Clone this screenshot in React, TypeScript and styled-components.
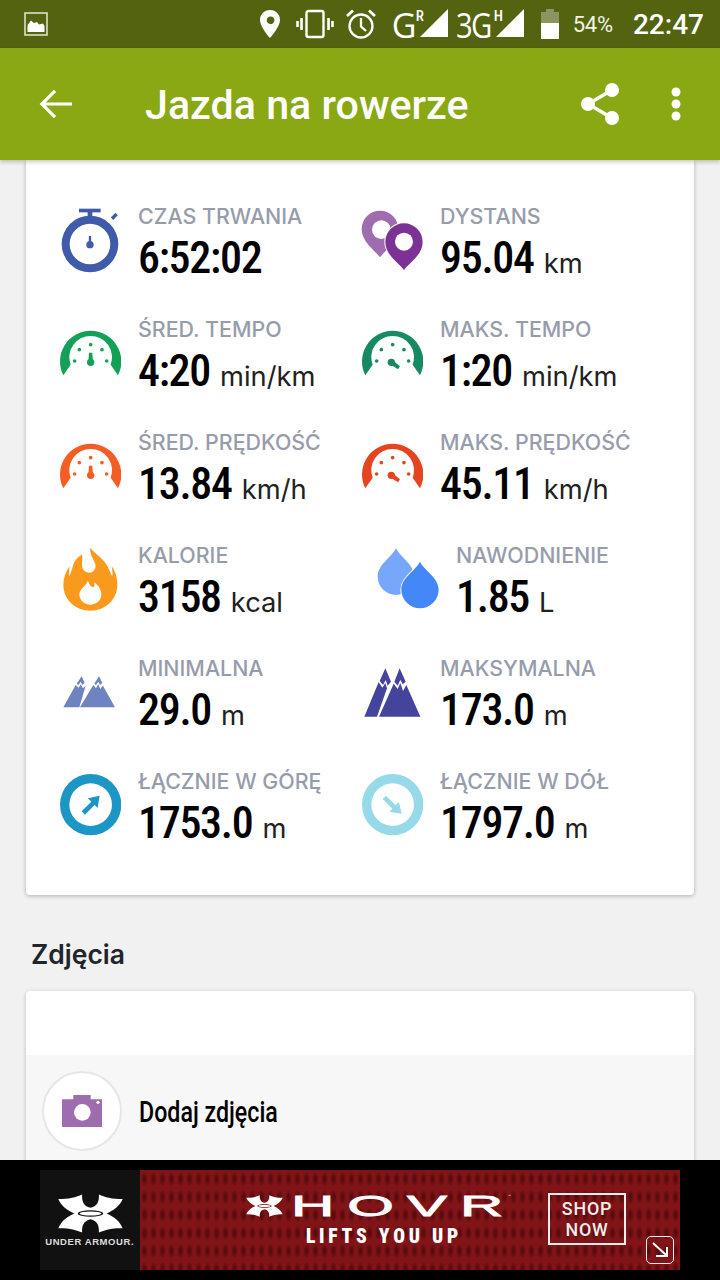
import React from "react";
import styled, { createGlobalStyle } from "styled-components";

const Global = createGlobalStyle`
  html, body { margin: 0; padding: 0; background: #f1f1f1; }
  #root { width: 720px; height: 1280px; overflow: hidden; }
  * { box-sizing: border-box; }
`;

const Screen = styled.div`
  width: 720px;
  height: 1280px;
  display: flex;
  flex-direction: column;
  background: #f1f1f1;
  font-family: Roboto, "Liberation Sans", sans-serif;
  overflow: hidden;
`;

const StatusBar = styled.div`
  height: 48px;
  flex: none;
  background: #53630f;
  color: #fff;
  display: flex;
  align-items: center;
  padding: 0 16px 0 24px;
`;

const StatusRight = styled.div`
  margin-left: auto;
  display: flex;
  align-items: center;
`;

const NetLabel = styled.span<{ $sx: number }>`
  font-family: "Open Sans", Roboto, sans-serif;
  font-size: 34px;
  line-height: 36px;
  letter-spacing: -2px;
  display: inline-block;
  transform: scaleX(${p => p.$sx});
  transform-origin: left center;
  margin-top: 2px;
`;

const Net = styled.div<{ $w: number; $ml: number }>`
  position: relative;
  display: flex;
  height: 48px;
  align-items: center;
  width: ${p => p.$w}px;
  margin-left: ${p => p.$ml}px;
`;

const NetSup = styled.span<{ $x: number }>`
  position: absolute;
  left: ${p => p.$x}px;
  top: 9px;
  font-family: Roboto, sans-serif;
  font-size: 15px;
  font-weight: 500;
  line-height: 14px;
  font-stretch: 80%;
`;

const NetTriangle = styled.svg`
  position: absolute;
  right: 0;
  top: 9px;
`;

const Percent = styled.span`
  font-size: 22px;
  color: #f1f3e5;
  margin-left: 14px;
  letter-spacing: -0.2px;
`;

const Clock = styled.span`
  font-size: 28px;
  font-weight: 500;
  margin-left: 20px;
`;

const AppBar = styled.header`
  height: 112px;
  flex: none;
  background: #89a813;
  color: #fff;
  display: flex;
  align-items: center;
  padding: 0 39px 0 39px;
  position: relative;
  z-index: 2;
  box-shadow: 0 2px 4px rgba(0, 0, 0, 0.22);
`;

const Title = styled.h1`
  margin: 2px 0 0 72px;
  font-size: 41.2px;
  font-weight: 500;
  font-family: Roboto, sans-serif;
  white-space: nowrap;
`;

const BarActions = styled.div`
  margin-left: auto;
  display: flex;
  align-items: center;
  gap: 52px;
`;

const Content = styled.main`
  flex: 1;
  min-height: 0;
  padding: 0 26px;
  overflow: hidden;
`;

const StatsCard = styled.section`
  background: #fff;
  height: 735px;
  border-radius: 0 0 4px 4px;
  box-shadow: 0 1px 4px rgba(0, 0, 0, 0.28);
  display: grid;
  grid-template-columns: 302px 302px;
  grid-auto-rows: 113px;
  padding: 43px 0 0 34px;
`;

const Stat = styled.div`
  display: flex;
  align-items: flex-start;
`;

const IconSlot = styled.div<{ $w: number }>`
  width: ${p => p.$w}px;
  flex: none;
  height: 74px;
  display: flex;
  align-items: center;
`;

const IconShift = styled.div<{ $ml: number }>`
  margin-left: ${p => p.$ml}px;
  display: flex;
`;

const StatText = styled.div`
  display: flex;
  flex-direction: column;
`;

const Label = styled.div`
  font-family: Inter, Roboto, sans-serif;
  font-size: 21.4px;
  font-weight: 500;
  line-height: 26px;
  color: #979cab;
  white-space: nowrap;
`;

const ValueRow = styled.div`
  display: flex;
  align-items: baseline;
  margin-top: 5px;
  white-space: nowrap;
`;

const Value = styled.span`
  font-family: Roboto, sans-serif;
  font-size: 44px;
  line-height: 48px;
  font-weight: 500;
  color: #000;
  font-stretch: 78%;
  letter-spacing: -1.3px;
`;

const Unit = styled.span`
  font-family: Inter, Roboto, sans-serif;
  font-size: 27.3px;
  color: #212121;
  margin-left: 10px;
`;

const SectionTitle = styled.h2`
  margin: 41px 0 0 5px;
  height: 36px;
  font-family: Inter, Roboto, sans-serif;
  font-size: 26.5px;
  line-height: 36px;
  font-weight: 600;
  color: #212529;
`;

const PhotoCard = styled.section`
  margin-top: 19px;
  background: #fff;
  height: 200px;
  border-radius: 4px 4px 0 0;
  box-shadow: 0 1px 4px rgba(0, 0, 0, 0.22);
  padding-top: 64px;
`;

const AddRow = styled.div`
  height: 136px;
  background: #f7f7f7;
  display: flex;
  align-items: flex-start;
  padding: 16px 0 0 16px;
`;

const CameraCircle = styled.div`
  width: 80px;
  height: 80px;
  border-radius: 50%;
  background: #fff;
  border: 2px solid #e6e6e6;
  display: flex;
  align-items: center;
  justify-content: center;
`;

const AddLabel = styled.span`
  margin: 21px 0 0 17px;
  font-size: 29px;
  font-weight: 500;
  line-height: 40px;
  color: #000;
  display: inline-block;
  transform: scaleX(0.8);
  transform-origin: left center;
  white-space: nowrap;
`;

const AdDock = styled.footer`
  position: fixed;
  left: 0;
  bottom: 0;
  width: 720px;
  height: 120px;
  background: #000;
  display: flex;
  padding: 10px 40px;
  z-index: 3;
`;

const AdLogo = styled.div`
  width: 100px;
  height: 100px;
  background: #111;
  display: flex;
  flex-direction: column;
  align-items: center;
  padding-top: 24px;
`;

const AdBrand = styled.span`
  font-family: "Liberation Sans", sans-serif;
  font-weight: 700;
  font-size: 8.5px;
  line-height: 10px;
  letter-spacing: 0.5px;
  color: #ddd;
  margin-top: 4px;
  white-space: nowrap;
  transform: scaleX(1.12);
`;

const AdBody = styled.div`
  position: relative;
  flex: 1;
  background-color: #801417;
  background-image: radial-gradient(ellipse 3.5px 7.5px at center, #5a0b10 0 30%, transparent 100%);
  background-size: 9px 18px;
  display: flex;
`;

const AdCenter = styled.div`
  width: 276px;
  margin-left: 100px;
  display: flex;
  flex-direction: column;
  align-items: center;
  padding-top: 25px;
  color: #fff;
`;

const HovrRow = styled.div`
  position: relative;
  align-self: flex-start;
  display: flex;
  align-items: center;
  height: 22px;
  margin-left: 6px;
`;

const Hovr = styled.span`
  font-family: "Liberation Sans", sans-serif;
  font-size: 30px;
  font-weight: 400;
  line-height: 22px;
  letter-spacing: 6.5px;
  -webkit-text-stroke: 0.8px #fff;
  display: inline-block;
  width: 106px;
  transform: scaleX(2);
  transform-origin: left center;
  margin-left: 8px;
  white-space: nowrap;
`;

const HovrEnd = styled.span`
  letter-spacing: 0;
`;

const Tm = styled.span`
  position: absolute;
  left: 262px;
  top: -1px;
  font-family: Roboto, sans-serif;
  font-size: 5px;
  line-height: 5px;
  color: #ddd;
`;

const Lifts = styled.div`
  font-family: Roboto, sans-serif;
  font-size: 19.5px;
  line-height: 20px;
  font-weight: 900;
  font-stretch: 75%;
  letter-spacing: 3.8px;
  margin-top: 10px;
  margin-left: 12px;
  white-space: nowrap;
`;

const ShopBox = styled.div`
  margin: 23px 0 0 32px;
  width: 78px;
  height: 52px;
  border: 2px solid #eee;
  color: #eee;
  font-family: Roboto, sans-serif;
  font-size: 17.9px;
  font-weight: 500;
  font-stretch: 88%;
  line-height: 21px;
  letter-spacing: 0.8px;
  text-align: center;
  padding-top: 3px;
  flex: none;
`;

const AdBadge = styled.div`
  position: absolute;
  right: 6px;
  bottom: 6px;
  width: 28px;
  height: 28px;
  border: 1px solid #eee;
  border-radius: 5px;
  display: flex;
  align-items: center;
  justify-content: center;
`;

const Stopwatch = () => (
  <svg width="58.3" height="65" viewBox="63 40 175 195" fill="#3f5ba9">
    <rect x="117" y="42" width="65" height="11" />
    <rect x="143" y="50" width="14" height="16" />
    <rect x="213" y="60" width="20" height="10" transform="rotate(-45 223 65)" />
    <path fillRule="evenodd" d="M150 63a85 85 0 1 0 0 170a85 85 0 1 0 0-170zM150 87a61 61 0 1 1 0 122a61 61 0 1 1 0-122z" />
    <circle cx="150" cy="150" r="11" />
    <rect x="146.5" y="124" width="7" height="26" />
  </svg>
);

const Gauge = ({ color, tilted }: { color: string; tilted?: boolean }) => (
  <svg width="61.3" height="46" viewBox="58 408 184 138" fill={color}>
    <path d="M68 544A92 92 0 1 1 232 544L210 512A64 64 0 1 0 90 512Z" />
    <circle cx="116" cy="467" r="5.5" />
    <circle cx="150" cy="452" r="5.5" />
    <circle cx="184" cy="467" r="5.5" />
    <circle cx="102" cy="501" r="5.5" />
    <circle cx="198" cy="501" r="5.5" />
    {tilted ? (
      <>
        <circle cx="146" cy="505" r="11" />
        <path d="M148 497L172 517L166 526L141 510Z" />
      </>
    ) : (
      <>
        <circle cx="150" cy="505" r="11" />
        <path d="M145 476H155L157 505H143Z" />
      </>
    )}
  </svg>
);

const pin = (cx: number, cy: number, r: number, tip: number) =>
  `M${cx - r} ${cy}A${r} ${r} 0 1 1 ${cx + r} ${cy}C${cx + r} ${cy + r * 0.7} ${cx + r * 0.3} ${tip - 22} ${cx} ${tip}C${cx - r * 0.3} ${tip - 22} ${cx - r} ${cy + r * 0.7} ${cx - r} ${cy}Z`;

const Pins = () => (
  <svg width="62.3" height="62.3" viewBox="963 45 187 187">
    <path d={pin(1020, 105, 55, 190)} fill="#a06cb0" />
    <circle cx="1024" cy="107" r="28" fill="#fff" />
    <path d={pin(1092, 144, 56, 228)} fill="#7c3294" stroke="#fff" strokeWidth="6" paintOrder="stroke" />
    <circle cx="1092" cy="143" r="27" fill="#fff" />
  </svg>
);

const Flame = () => (
  <svg width="54.7" height="64" viewBox="68 384 164 192">
    <path
      fill="#fa9a1c"
      fillRule="evenodd"
      d="M150 386C148 395 152 410 158 420C164 430 167 438 165 446C162 456 155 461 146 461C135 461 126 453 125 442C124 432 128 420 125 406C115 413 102 424 98 440C95 450 92 460 87 472C85 462 86 452 88 441C76 458 69 478 69 497C69 540 104 575 150 575C196 575 231 540 231 497C231 478 226 458 214 442C215 452 218 462 216 472C209 462 204 440 192 428C182 414 160 400 150 386ZM143 485C148 500 155 505 160 505C163 500 163 495 162 490C175 500 183 513 183 526C183 545 168 557 150 557C132 557 117 545 117 526C117 510 135 503 143 485Z"
    />
  </svg>
);

const drop = (cx: number, top: number, cy: number, r: number) =>
  `M${cx} ${top}C${cx + 14} ${top + 28} ${cx + r} ${cy - r * 0.65} ${cx + r} ${cy}A${r} ${r} 0 1 1 ${cx - r} ${cy}C${cx - r} ${cy - r * 0.65} ${cx - 14} ${top + 28} ${cx} ${top}Z`;

const Drops = () => (
  <svg width="62.3" height="61.3" viewBox="1011 389 187 184">
    <path d={drop(1068, 390, 475, 55)} fill="#75a7fa" />
    <path d={drop(1140, 430, 514, 56)} fill="#4487f6" stroke="#fff" strokeWidth="6" paintOrder="stroke" />
  </svg>
);

const Mountains = ({ color, large }: { color: string; large?: boolean }) =>
  large ? (
    <svg width="56.7" height="49" viewBox="971 59 170 147" fill={color}>
      <path d="M1035 60L1052 100L1042 112L1036 95L1028 110L1018 98Z" />
      <path d="M1078 60L1096 100L1087 108L1080 94L1072 112L1062 100Z" />
      <path d="M1015 101L1026 118L1035 104L1040 120L1010 205H972Z" />
      <path d="M1060 106L1072 122L1080 104L1088 128L1098 110L1140 205H1016Z" />
    </svg>
  ) : (
    <svg width="52.3" height="31.7" viewBox="69 111 157 95" fill={color}>
      <path d="M125 112L134 132L127 138L122 128L116 138L110 134Z" />
      <path d="M177 112L187 132L180 138L175 128L168 138L163 134Z" />
      <path d="M107 138L116 146L122 136L129 148L137 140L118 205H70Z" />
      <path d="M160 138L168 148L175 136L181 150L189 140L225 205H120Z" />
    </svg>
  );

const ArrowRing = ({ color, down }: { color: string; down?: boolean }) => (
  <svg width="61.3" height="61.3" viewBox="58 375 184 184" fill={color}>
    <path fillRule="evenodd" d="M150 375a92 92 0 1 0 0 184a92 92 0 1 0 0-184zM150 403a64 64 0 1 1 0 128a64 64 0 1 1 0-128z" />
    <path
      d="M177 440L142 448L152 458L123 487L133 497L162 468L171 477Z"
      transform={down ? "rotate(90 150 467)" : undefined}
    />
  </svg>
);

const UaMark = ({ w, h, color }: { w: number; h: number; color: string }) => (
  <svg width={w} height={h} viewBox="173 432 194 116" fill={color}>
    <path
      fillRule="evenodd"
      d="M174 447C205 447 228 441 245 433C244 452 248 468 270 473C292 468 296 452 295 433C312 441 335 447 366 447C359 466 340 481 318 490C340 499 359 515 366 534C335 533 312 539 295 547C296 528 292 512 270 507C248 512 244 528 245 547C228 539 205 533 174 534C181 515 200 499 222 490C200 481 181 466 174 447ZM232 490A38 10 0 0 0 308 490A38 10 0 0 0 232 490Z"
    />
    <ellipse cx="270" cy="490" rx="33" ry="6" />
  </svg>
);

const Triangle = () => (
  <NetTriangle width="28" height="28" viewBox="0 0 28 28">
    <path d="M28 0V28H0Z" fill="#fff" />
  </NetTriangle>
);

const stats = [
  { icon: <Stopwatch />, label: "CZAS TRWANIA", value: "6:52:02", unit: "", w: 78, ml: 1 },
  { icon: <Pins />, label: "DYSTANS", value: "95.04", unit: "km", w: 78, ml: -1 },
  { icon: <Gauge color="#12a156" />, label: "ŚRED. TEMPO", value: "4:20", unit: "min/km", w: 78, ml: 0 },
  { icon: <Gauge color="#188a63" tilted />, label: "MAKS. TEMPO", value: "1:20", unit: "min/km", w: 78, ml: 0 },
  { icon: <Gauge color="#f45e25" />, label: "ŚRED. PRĘDKOŚĆ", value: "13.84", unit: "km/h", w: 78, ml: 0 },
  { icon: <Gauge color="#e4441f" tilted />, label: "MAKS. PRĘDKOŚĆ", value: "45.11", unit: "km/h", w: 78, ml: 0 },
  { icon: <Flame />, label: "KALORIE", value: "3158", unit: "kcal", w: 78, ml: 3 },
  { icon: <Drops />, label: "NAWODNIENIE", value: "1.85", unit: "L", w: 94, ml: 15 },
  { icon: <Mountains color="#6f83c0" />, label: "MINIMALNA", value: "29.0", unit: "m", w: 78, ml: 3 },
  { icon: <Mountains color="#44449c" large />, label: "MAKSYMALNA", value: "173.0", unit: "m", w: 78, ml: 2 },
  { icon: <ArrowRing color="#1c96c5" />, label: "ŁĄCZNIE W GÓRĘ", value: "1753.0", unit: "m", w: 78, ml: 0 },
  { icon: <ArrowRing color="#96d9e9" down />, label: "ŁĄCZNIE W DÓŁ", value: "1797.0", unit: "m", w: 78, ml: 0 },
];

export default function App() {
  return (
    <Screen>
      <Global />
      <StatusBar>
        <svg width="24" height="24" viewBox="0 0 24 24" fill="none">
          <rect x="1" y="1" width="22" height="22" stroke="#e3e7d3" strokeWidth="1.5" />
          <path d="M3.5 20V13L7 8.5L10 11L13 10L15 12.5L19 11.5L20.5 14V20Z" fill="#fff" />
        </svg>
        <StatusRight>
          <svg width="22" height="30" viewBox="0 0 22 30" fill="#fff">
            <path fillRule="evenodd" d="M11 1C5 1 1 5.5 1 11C1 18 11 29 11 29S21 18 21 11C21 5.5 17 1 11 1ZM11 7.5A3.8 3.8 0 1 1 11 15A3.8 3.8 0 0 1 11 7.5Z" />
          </svg>
          <svg width="38" height="30" viewBox="0 0 38 30" fill="none" stroke="#fff" style={{ marginLeft: 15 }}>
            <rect x="10.5" y="2" width="17" height="26" rx="2" strokeWidth="2.4" />
            <path d="M5.5 9V21M1.5 12V18M32.5 9V21M36.5 12V18" strokeWidth="2.6" />
          </svg>
          <svg width="32" height="32" viewBox="0 0 32 32" fill="none" stroke="#fff" strokeWidth="2.3" style={{ marginLeft: 11 }}>
            <circle cx="16" cy="18" r="11.5" />
            <path d="M16 10V18.5L21 23" />
            <path d="M2 8L8 2.5M30 8L24 2.5" strokeWidth="2.8" />
          </svg>
          <Net $w={56} $ml={15}>
            <NetLabel $sx={1}>G</NetLabel>
            <NetSup $x={24}>R</NetSup>
            <Triangle />
          </Net>
          <Net $w={68} $ml={8}>
            <NetLabel $sx={0.86}>3G</NetLabel>
            <NetSup $x={38}>H</NetSup>
            <Triangle />
          </Net>
          <svg width="18" height="30" viewBox="0 0 18 30" style={{ marginLeft: 17 }}>
            <path d="M5 0H13V3H18V30H0V3H5Z" fill="#8b9561" />
            <rect y="14" width="18" height="16" fill="#fff" />
          </svg>
          <Percent>54%</Percent>
          <Clock>22:47</Clock>
        </StatusRight>
      </StatusBar>
      <AppBar>
        <svg width="34" height="32" viewBox="0 0 36 32" fill="none" stroke="#fff" strokeWidth="3.4">
          <path d="M35 16H4M17 2L3 16L17 30" />
        </svg>
        <Title>Jazda na rowerze</Title>
        <BarActions>
          <svg width="38" height="42" viewBox="0 0 38 42" fill="#fff">
            <circle cx="7" cy="21" r="7" />
            <circle cx="31" cy="7" r="7" />
            <circle cx="31" cy="35" r="7" />
            <path d="M7 21L31 7M7 21L31 35" stroke="#fff" strokeWidth="3.4" />
          </svg>
          <svg width="10" height="34" viewBox="0 0 10 34" fill="#fff">
            <circle cx="5" cy="5" r="4.5" />
            <circle cx="5" cy="17" r="4.5" />
            <circle cx="5" cy="29" r="4.5" />
          </svg>
        </BarActions>
      </AppBar>
      <Content>
        <StatsCard>
          {stats.map(s => (
            <Stat key={s.label}>
              <IconSlot $w={s.w}>
                <IconShift $ml={s.ml}>{s.icon}</IconShift>
              </IconSlot>
              <StatText>
                <Label>{s.label}</Label>
                <ValueRow>
                  <Value>{s.value}</Value>
                  {s.unit && <Unit>{s.unit}</Unit>}
                </ValueRow>
              </StatText>
            </Stat>
          ))}
        </StatsCard>
        <SectionTitle>Zdjęcia</SectionTitle>
        <PhotoCard>
          <AddRow>
            <CameraCircle>
              <svg width="40" height="32" viewBox="186 135 120 96">
                <path d="M186 148H220V135H272V148H306V231H186Z" fill="#a06cb0" />
                <circle cx="247" cy="187" r="25" fill="#fff" />
                <circle cx="294" cy="157" r="5" fill="#fff" />
              </svg>
            </CameraCircle>
            <AddLabel>Dodaj zdjęcia</AddLabel>
          </AddRow>
        </PhotoCard>
      </Content>
      <AdDock>
        <AdLogo>
          <UaMark w={65} h={39} color="#fff" />
          <AdBrand>UNDER ARMOUR.</AdBrand>
        </AdLogo>
        <AdBody>
          <AdCenter>
            <HovrRow>
              <UaMark w={37} h={22} color="#fff" />
              <Hovr>HOV<HovrEnd>R</HovrEnd></Hovr>
              <Tm>™</Tm>
            </HovrRow>
            <Lifts>LIFTS YOU UP</Lifts>
          </AdCenter>
          <ShopBox>SHOP<br />NOW</ShopBox>
          <AdBadge>
            <svg width="20" height="20" viewBox="0 0 20 20" fill="none" stroke="#fff" strokeWidth="2">
              <path d="M3 3L16 15M17 7V16H6" />
            </svg>
          </AdBadge>
        </AdBody>
      </AdDock>
    </Screen>
  );
}
